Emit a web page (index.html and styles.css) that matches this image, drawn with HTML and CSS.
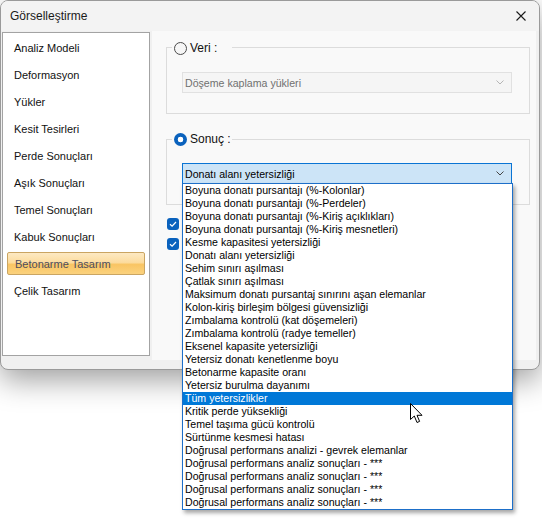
FILE: index.html
```html
<!DOCTYPE html>
<html lang="tr">
<head>
<meta charset="utf-8">
<title>Görselleştirme</title>
<link rel="stylesheet" href="styles.css">
</head>
<body>
<div class="window">
  <div class="titlebar">
    <span class="title">Görselleştirme</span>
    <svg class="close" width="10" height="10" viewBox="0 0 10 10"><path d="M0.5 0.5 L9.5 9.5 M9.5 0.5 L0.5 9.5" stroke="#1a1a1a" stroke-width="1.1" fill="none"/></svg>
  </div>
  <div class="body">
    <ul class="sidebar">
      <li class="nav-item">Analiz Modeli</li>
      <li class="nav-item">Deformasyon</li>
      <li class="nav-item">Yükler</li>
      <li class="nav-item">Kesit Tesirleri</li>
      <li class="nav-item">Perde Sonuçları</li>
      <li class="nav-item">Aşık Sonuçları</li>
      <li class="nav-item">Temel Sonuçları</li>
      <li class="nav-item">Kabuk Sonuçları</li>
      <li class="nav-item active">Betonarme Tasarım</li>
      <li class="nav-item">Çelik Tasarım</li>
    </ul>
    <div class="content">
      <div class="group group-veri">
        <div class="legend"><span class="radio"></span><span class="legend-text">Veri :</span></div>
        <div class="combo disabled">
          <span class="combo-text">Döşeme kaplama yükleri</span>
          <svg class="chevron" width="8" height="5" viewBox="0 0 8 5"><path d="M0.5 0.5 L4 4 L7.5 0.5" stroke="#b5b5b5" fill="none"/></svg>
        </div>
      </div>
      <div class="group group-sonuc">
        <div class="legend"><span class="radio checked"></span><span class="legend-text">Sonuç :</span></div>
        <div class="combo open">
          <span class="combo-text">Donatı alanı yetersizliği</span>
          <svg class="chevron" width="8" height="5" viewBox="0 0 8 5"><path d="M0.5 0.5 L4 4 L7.5 0.5" stroke="#444" fill="none"/></svg>
          <ul class="dropdown">
            <li>Boyuna donatı pursantajı (%-Kolonlar)</li>
            <li>Boyuna donatı pursantajı (%-Perdeler)</li>
            <li>Boyuna donatı pursantajı (%-Kiriş açıklıkları)</li>
            <li>Boyuna donatı pursantajı (%-Kiriş mesnetleri)</li>
            <li>Kesme kapasitesi yetersizliği</li>
            <li>Donatı alanı yetersizliği</li>
            <li>Sehim sınırı aşılması</li>
            <li>Çatlak sınırı aşılması</li>
            <li>Maksimum donatı pursantaj sınırını aşan elemanlar</li>
            <li>Kolon-kiriş birleşim bölgesi güvensizliği</li>
            <li>Zımbalama kontrolü (kat döşemeleri)</li>
            <li>Zımbalama kontrolü (radye temeller)</li>
            <li>Eksenel kapasite yetersizliği</li>
            <li>Yetersiz donatı kenetlenme boyu</li>
            <li>Betonarme kapasite oranı</li>
            <li>Yetersiz burulma dayanımı</li>
            <li class="selected">Tüm yetersizlikler</li>
            <li>Kritik perde yüksekliği</li>
            <li>Temel taşıma gücü kontrolü</li>
            <li>Sürtünme kesmesi hatası</li>
            <li>Doğrusal performans analizi - gevrek elemanlar</li>
            <li>Doğrusal performans analiz sonuçları - ***</li>
            <li>Doğrusal performans analiz sonuçları - ***</li>
            <li>Doğrusal performans analiz sonuçları - ***</li>
            <li>Doğrusal performans analiz sonuçları - ***</li>
          </ul>
        </div>
      </div>
      <div class="checks">
        <span class="check"><svg width="12" height="12" viewBox="0 0 12 12"><path d="M3 6.2 L5.1 8.2 L9 4" stroke="#fff" stroke-width="1.2" fill="none"/></svg></span>
        <span class="check"><svg width="12" height="12" viewBox="0 0 12 12"><path d="M3 6.2 L5.1 8.2 L9 4" stroke="#fff" stroke-width="1.2" fill="none"/></svg></span>
      </div>
    </div>
  </div>
</div>
<svg class="cursor" width="14" height="21" viewBox="0 0 14 21"><path d="M0.5 0.5 L0.5 16.5 L4.3 13 L7 19.5 L9.6 18.4 L7 12.3 L12 12.3 Z" fill="#fff" stroke="#000" stroke-width="1" stroke-linejoin="miter"/></svg>
</body>
</html>
```

FILE: styles.css
```css
* { box-sizing: border-box; }
html, body { margin: 0; padding: 0; background: #ffffff; }
body {
  width: 542px;
  height: 518px;
  position: relative;
  overflow: hidden;
  font-family: "Liberation Sans", Arial, sans-serif;
  color: #000;
}
.window {
  width: 540px;
  height: 370px;
  border: 1px solid #9a9a9a;
  border-radius: 8px;
  background: #f0f0f0;
  box-shadow: 0 10px 30px rgba(0, 0, 0, 0.38);
}
.titlebar {
  height: 30px;
  display: flex;
  align-items: center;
  justify-content: space-between;
  padding: 0 13px 0 9px;
  background: #f3f3f3;
  border-radius: 7px 7px 0 0;
}
.title { font-size: 12px; color: #1a1a1a; }
.close { display: block; }
.body {
  display: flex;
  align-items: flex-start;
  height: 338px;
}
.sidebar {
  list-style: none;
  margin: 1px 0 0 1px;
  padding: 2px 0 0 0;
  width: 148px;
  height: 324px;
  background: #ffffff;
  border: 1px solid #a3a3a3;
}
.nav-item {
  height: 27px;
  line-height: 27px;
  padding-left: 11px;
  font-size: 11px;
  color: #111;
  white-space: nowrap;
}
.nav-item.active {
  margin: 1px 4px 3px 4px;
  height: 23px;
  line-height: 22px;
  padding-left: 7px;
  border: 1px solid #caa562;
  border-radius: 2px;
  color: #4d4d5e;
  background: linear-gradient(#fde9c3 0%, #fcdc9e 45%, #f9c563 55%, #fbd27e 100%);
}
.content {
  margin-left: 2px;
  width: 384px;
  height: 329px;
  background: #f9f9f9;
  padding: 16px 0 0 14px;
}
.group {
  width: 364px;
  border: 1px solid #dcdcdc;
}
.group-veri { height: 67px; }
.group-sonuc { height: 66px; margin-top: 25px; }
.legend {
  display: flex;
  align-items: center;
  gap: 3px;
  width: 60px;
  height: 14px;
  margin: -7px 0 0 5px;
  padding-left: 2px;
  background: #f9f9f9;
}
.group-sonuc .legend { margin-top: -8px; }
.legend-text { font-size: 12px; color: #111; }
.radio {
  width: 13px;
  height: 13px;
  border-radius: 50%;
  border: 1px solid #4b4b4b;
  background: #f6f6f6;
  flex: none;
}
.radio.checked {
  border: none;
  background: radial-gradient(circle, #ffffff 0 2.6px, #0a62bd 3.1px);
}
.combo {
  position: relative;
  display: flex;
  align-items: center;
  justify-content: space-between;
  width: 330px;
  height: 21px;
  margin: 17px 0 0 15px;
  padding: 0 7px 0 2px;
  font-size: 10.6px;
  border: 1px solid #e1e1e1;
}
.combo.disabled { background: #f5f5f5; color: #707070; }
.combo.open { background: #cce4f7; border-color: #0a74d4; color: #000; }
.chevron { display: block; }
.dropdown {
  position: absolute;
  top: 100%;
  left: -1px;
  width: 331px;
  margin: 0;
  padding: 0;
  list-style: none;
  background: #ffffff;
  border: 1px solid #1d6fc9;
  box-shadow: 2px 3px 4px rgba(0, 0, 0, 0.35);
  z-index: 5;
}
.dropdown li {
  height: 13px;
  line-height: 13px;
  padding-left: 2px;
  font-size: 10.6px;
  color: #000;
  white-space: nowrap;
}
.dropdown li.selected { background: #0078d7; color: #ffffff; }
.checks {
  display: flex;
  flex-direction: column;
  gap: 8px;
  margin: 13px 0 0 1px;
}
.check {
  display: block;
  width: 12px;
  height: 12px;
  border-radius: 3px;
  background: #0a62bd;
}
.check svg { display: block; }
.cursor {
  position: absolute;
  left: 410px;
  top: 403px;
  z-index: 10;
}
```
